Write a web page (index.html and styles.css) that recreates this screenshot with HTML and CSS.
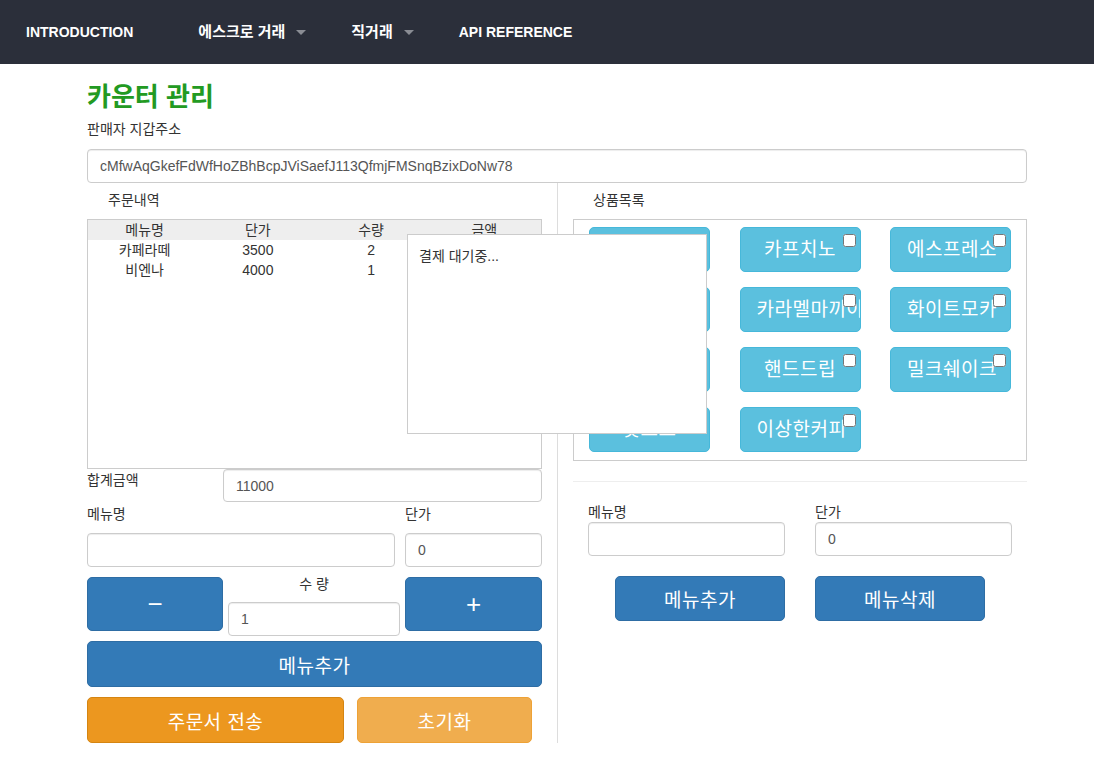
FILE: index.html
```html
<!DOCTYPE html>
<html lang="ko">
<head>
<meta charset="utf-8">
<title>카운터 관리</title>
<link rel="stylesheet" href="styles.css">
</head>
<body>
<nav class="navbar">
  <a class="nav-item nav-latin">INTRODUCTION</a>
  <a class="nav-item nav-drop nav-escrow">에스크로 거래<span class="caret"></span></a>
  <a class="nav-item nav-drop nav-direct">직거래<span class="caret"></span></a>
  <a class="nav-item nav-latin nav-api">API REFERENCE</a>
</nav>

<main class="page">
  <h1 class="title">카운터 관리</h1>
  <div class="label">판매자 지갑주소</div>
  <input class="field wallet" type="text" value="cMfwAqGkefFdWfHoZBhBcpJViSaefJ113QfmjFMSnqBzixDoNw78">

  <div class="columns">
    <section class="left">
      <div class="section-title">주문내역</div>
      <div class="order-box">
        <table class="order-table">
          <thead>
            <tr><th>메뉴명</th><th>단가</th><th>수량</th><th>금액</th></tr>
          </thead>
          <tbody>
            <tr><td>카페라떼</td><td>3500</td><td>2</td><td></td></tr>
            <tr><td>비엔나</td><td>4000</td><td>1</td><td></td></tr>
          </tbody>
        </table>
      </div>

      <div class="total-row">
        <div class="label total-label">합계금액</div>
        <input class="field total-input" type="text" value="11000">
      </div>

      <div class="menu-grid">
        <div class="label">메뉴명</div>
        <div class="label">단가</div>
        <input class="field" type="text" value="">
        <input class="field" type="text" value="0">
      </div>

      <div class="qty-row">
        <button class="btn btn-primary btn-qty">&minus;</button>
        <div class="qty-mid">
          <div class="qty-label">수 량</div>
          <input class="field" type="text" value="1">
        </div>
        <button class="btn btn-primary btn-qty">+</button>
      </div>

      <button class="btn btn-primary btn-block">메뉴추가</button>

      <div class="submit-row">
        <button class="btn btn-warning-dark">주문서 전송</button>
        <button class="btn btn-warning">초기화</button>
      </div>

      <div class="popup">결제 대기중...</div>
    </section>

    <section class="right">
      <div class="section-title">상품목록</div>
      <div class="product-box">
        <div class="product"><span class="pname">아메리카노</span><input class="pcheck" type="checkbox"></div>
        <div class="product"><span class="pname">카프치노</span><input class="pcheck" type="checkbox"></div>
        <div class="product"><span class="pname">에스프레소</span><input class="pcheck" type="checkbox"></div>
        <div class="product"><span class="pname">카페라떼</span><input class="pcheck" type="checkbox"></div>
        <div class="product"><span class="pname">카라멜마끼아또</span><input class="pcheck" type="checkbox"></div>
        <div class="product"><span class="pname">화이트모카</span><input class="pcheck" type="checkbox"></div>
        <div class="product"><span class="pname">비엔나</span><input class="pcheck" type="checkbox"></div>
        <div class="product"><span class="pname">핸드드립</span><input class="pcheck" type="checkbox"></div>
        <div class="product"><span class="pname">밀크쉐이크</span><input class="pcheck" type="checkbox"></div>
        <div class="product"><span class="pname">핫초코</span><input class="pcheck" type="checkbox"></div>
        <div class="product"><span class="pname">이상한커피</span><input class="pcheck" type="checkbox"></div>
      </div>

      <hr class="divider">

      <div class="admin-grid">
        <div class="label">메뉴명</div>
        <div class="label">단가</div>
        <input class="field" type="text" value="">
        <input class="field" type="text" value="0">
        <button class="btn btn-primary btn-admin btn-add">메뉴추가</button>
        <button class="btn btn-primary btn-admin btn-del">메뉴삭제</button>
      </div>
    </section>
  </div>
</main>
</body>
</html>
```

FILE: styles.css
```css
* { box-sizing: border-box; }

html, body {
  margin: 0;
  padding: 0;
  background: #fff;
}

body {
  font-family: "Liberation Sans", "Noto Sans CJK KR", sans-serif;
  font-size: 14px;
  line-height: 20px;
  color: #333;
}

/* NAVBAR */
.navbar {
  height: 64px;
  background: #2b2f3a;
  display: flex;
  align-items: center;
  padding-left: 26px;
}

.nav-item {
  color: #fff;
  font-size: 14px;
  font-weight: bold;
  text-decoration: none;
  white-space: nowrap;
  display: flex;
  align-items: center;
}

.nav-latin { letter-spacing: 0; }

.nav-drop {
  font-size: 15px;
  font-weight: bold;
}

.nav-escrow { margin-left: 65px; }
.nav-direct { margin-left: 45px; }
.nav-api { margin-left: 45px; }

.caret {
  display: inline-block;
  width: 0;
  height: 0;
  margin-left: 11px;
  border-top: 5px solid #8a8d94;
  border-left: 5px solid transparent;
  border-right: 5px solid transparent;
}

/* PAGE */
.page {
  width: 940px;
  margin-left: 87px;
}

.title {
  margin: 15px 0 0 0;
  font-size: 26px;
  line-height: 36px;
  font-weight: bold;
  color: #229a22;
}

.label {
  line-height: 20px;
  margin-top: 4px;
}

.field {
  display: block;
  width: 100%;
  height: 34px;
  padding: 0 12px;
  font-family: "Liberation Sans", "Noto Sans CJK KR", sans-serif;
  font-size: 14px;
  color: #555;
  background: #fff;
  border: 1px solid #ccc;
  border-radius: 4px;
  box-shadow: inset 0 1px 1px rgba(0,0,0,0.075);
  outline: none;
}

.wallet { margin-top: 10px; }

.columns {
  display: grid;
  grid-template-columns: 455px 470px;
  column-gap: 15px;
}

.left {
  position: relative;
}

.right {
  border-left: 1px solid #ddd;
  padding-left: 15px;
}

.section-title {
  margin-top: 7px;
  line-height: 20px;
  padding-left: 21px;
}

.right .section-title { padding-left: 20px; }

/* ORDER TABLE */
.order-box {
  margin-top: 9px;
  height: 250px;
  border: 1px solid #ccc;
}

.order-table {
  width: 100%;
  border-collapse: collapse;
  table-layout: fixed;
}

.order-table th,
.order-table td {
  padding: 0;
  line-height: 20px;
  text-align: center;
  font-weight: normal;
}

.order-table thead tr { background: #eee; }

.total-row {
  display: flex;
  align-items: flex-start;
}

.total-label {
  width: 136px;
  flex: none;
  margin-top: 1px;
}

.total-input {
  flex: 1;
  height: 33px;
}

.menu-grid {
  display: grid;
  grid-template-columns: 308px 137px;
  column-gap: 10px;
  margin-top: -2px;
}

.menu-grid .label { margin-bottom: 9px; }

/* BUTTONS */
.btn {
  font-family: "Liberation Sans", "Noto Sans CJK KR", sans-serif;
  font-size: 19px;
  letter-spacing: 0.5px;
  color: #fff;
  border: 1px solid transparent;
  border-radius: 5px;
  cursor: pointer;
  padding: 0;
}

.btn-primary {
  background: #337ab7;
  border-color: #2e6da4;
}

.btn-warning-dark {
  background: #ec971f;
  border-color: #d58512;
}

.btn-warning {
  background: #f0ad4e;
  border-color: #eea236;
}

.qty-row {
  display: grid;
  grid-template-columns: 136px 172px 137px;
  column-gap: 5px;
  margin-top: 10px;
  align-items: start;
}

.btn-qty {
  height: 54px;
  font-size: 26px;
  line-height: 1;
  letter-spacing: 0;
}

.qty-label {
  text-align: center;
  line-height: 14px;
  margin-top: 0;
}

.qty-mid .field { margin-top: 11px; }

.btn-block {
  display: block;
  width: 100%;
  height: 46px;
  margin-top: 5px;
}

.submit-row {
  display: flex;
  gap: 13px;
  margin-top: 10px;
}

.submit-row .btn { height: 46px; }
.submit-row .btn-warning-dark { width: 257px; }
.submit-row .btn-warning { width: 175px; }

/* POPUP */
.popup {
  position: absolute;
  left: 320px;
  top: 51px;
  width: 300px;
  height: 200px;
  background: #fff;
  border: 1px solid #ccc;
  padding: 11px 11px;
  line-height: 20px;
  z-index: 10;
}

/* PRODUCTS */
.product-box {
  margin-top: 9px;
  border: 1px solid #ccc;
  padding: 7px 15px 8px 15px;
  display: grid;
  grid-template-columns: repeat(3, 121px);
  column-gap: 29.5px;
  row-gap: 15px;
}

.product {
  position: relative;
  height: 45px;
  background: #5bc0de;
  border: 1px solid #46b8da;
  border-radius: 5px;
  color: #fff;
  font-size: 19px;
  letter-spacing: 0.5px;
  line-height: 43px;
  text-align: center;
  white-space: nowrap;
  overflow: hidden;
  padding: 0 16px;
}

.pname { display: inline-block; }

.pcheck {
  position: absolute;
  top: 6px;
  right: 4px;
  width: 13px;
  height: 13px;
  margin: 0;
}

.divider {
  border: 0;
  border-top: 1px solid #eee;
  margin: 20px 0 0 0;
}

.admin-grid {
  display: grid;
  grid-template-columns: 197px 197px;
  column-gap: 30px;
  margin-left: 15px;
  margin-top: 20px;
}

.admin-grid .label { margin-top: 0; }

.btn-admin {
  width: 170px;
  height: 45px;
  margin-top: 20px;
}

.btn-add { justify-self: end; }
.btn-del { justify-self: start; }
```
